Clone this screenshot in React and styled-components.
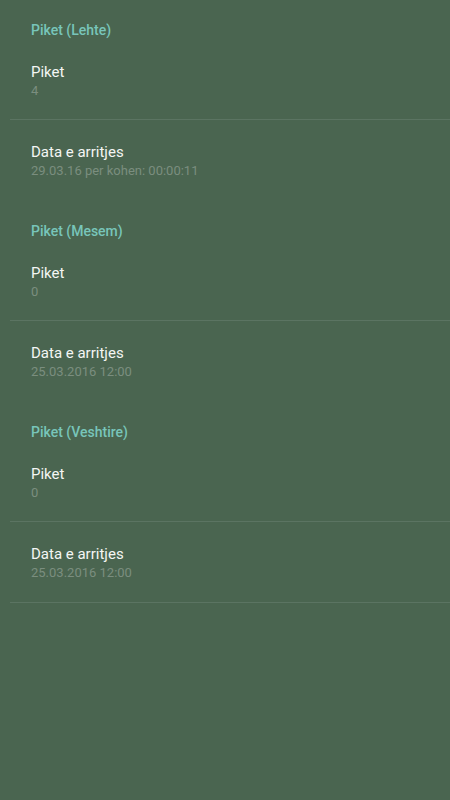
import React from "react";
import styled, { createGlobalStyle } from "styled-components";

const GlobalStyle = createGlobalStyle`
  html, body {
    margin: 0;
    padding: 0;
    background-color: #4a6550;
    font-family: Roboto, "Liberation Sans", sans-serif;
  }
`

const Screen = styled.div`
  width: 450px;
  height: 800px;
  background-color: #4a6550;
  display: flex;
  flex-direction: column;
`

const Category = styled.div`
  height: 48px;
  box-sizing: border-box;
  padding: 22px 0 0 31px;
  font-size: 14px;
  line-height: 17px;
  font-weight: 500;
  color: #78c5ba;
`

const Item = styled.div`
  height: ${props => props.h}px;
  box-sizing: border-box;
  padding: ${props => props.top}px 0 0 31px;
  display: flex;
  flex-direction: column;
`

const Title = styled.div`
  font-size: 15px;
  line-height: 20px;
  color: #f4f6f4;
`

const Summary = styled.div`
  font-size: 13px;
  line-height: 18px;
  color: #7b8e7f;
`

const Divider = styled.div`
  height: 1px;
  margin-left: 10px;
  background-color: #5b7462;
`

const sections = [
  { name: "Piket (Lehte)", points: "4", date: "29.03.16 per kohen: 00:00:11" },
  { name: "Piket (Mesem)", points: "0", date: "25.03.2016 12:00" },
  { name: "Piket (Veshtire)", points: "0", date: "25.03.2016 12:00" },
]

export default function App(){
  return(
    <Screen>
      <GlobalStyle />
      {sections.map((s, i) => (
        <React.Fragment key={s.name}>
          <Category>{s.name}</Category>
          <Item h={71} top={14}>
            <Title>Piket</Title>
            <Summary>{s.points}</Summary>
          </Item>
          <Divider />
          <Item h={i === sections.length - 1 ? 80 : 81} top={22}>
            <Title>Data e arritjes</Title>
            <Summary>{s.date}</Summary>
          </Item>
        </React.Fragment>
      ))}
      <Divider />
    </Screen>
  )
}
